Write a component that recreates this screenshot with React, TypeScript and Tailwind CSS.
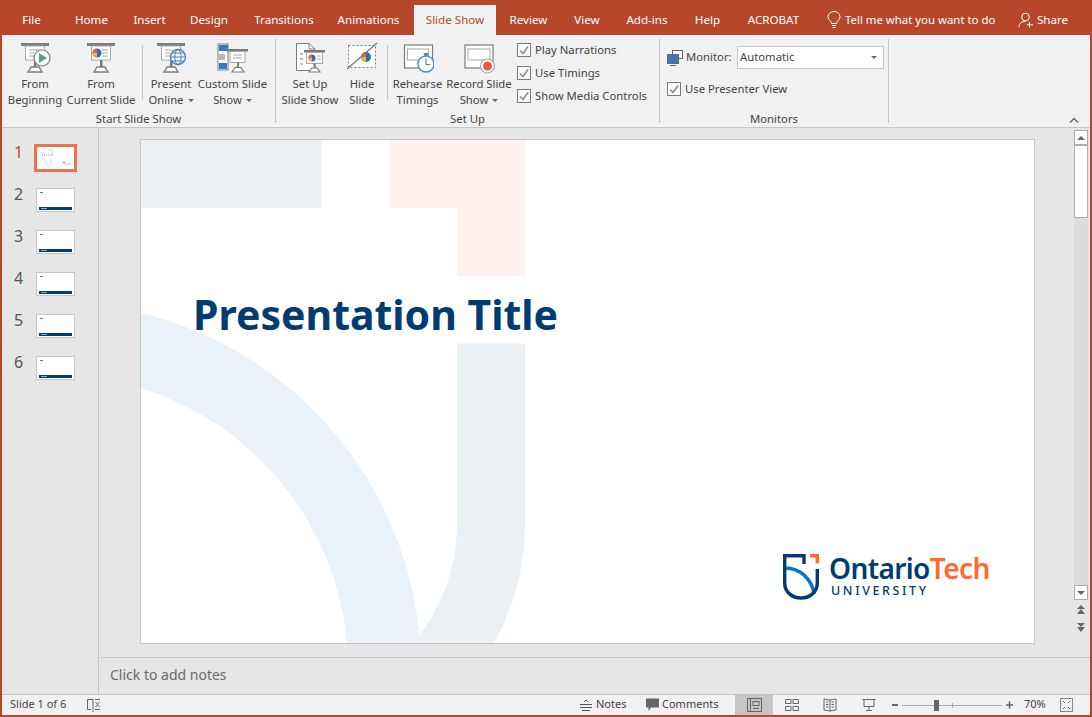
import type { ReactNode } from "react"

const FONT = "font-['Noto_Sans',sans-serif]"
const TABS = [
  { label: "File", w: "w-[59px]" },
  { label: "Home", w: "w-[61px]" },
  { label: "Insert", w: "w-[55px]" },
  { label: "Design", w: "w-[64px]" },
  { label: "Transitions", w: "w-[86px]" },
  { label: "Animations", w: "w-[83px]" },
]
const TABS_AFTER = [
  { label: "Review", w: "w-[65px]" },
  { label: "View", w: "w-[52px]" },
  { label: "Add-ins", w: "w-[68px]" },
  { label: "Help", w: "w-[53px]" },
  { label: "ACROBAT", w: "w-[79px]" },
]
const SLIDES = [2, 3, 4, 5, 6]

const GRAY = "#7b7b7b"
const LIGHT = "#a8a8a8"

function Board({ dim }: { dim?: boolean }) {
  return (
    <g>
      <rect x="2" y="1" width="28" height="3" fill={GRAY} />
      <rect x="6.5" y="4" width="19" height="14" fill="#fff" stroke={LIGHT} />
      <rect x="15" y="18" width="2.5" height="7" fill={GRAY} />
      <path d="M9 30 L12 25 H20 L23 30 Z" fill="#fff" stroke={GRAY} strokeWidth="1.4" />
      {!dim && <path d="M17 8 H23 M17 11 H23 M17 14 H23" stroke={LIGHT} />}
    </g>
  )
}

function Pie({ x, y, r }: { x: number; y: number; r: number }) {
  return (
    <g>
      <circle cx={x} cy={y} r={r} fill="#2f6fb0" />
      <path d={`M${x} ${y} L${x} ${y - r} A${r} ${r} 0 0 0 ${x - r} ${y} Z`} fill="#e8663f" />
      <path d={`M${x} ${y} L${x - r} ${y} A${r} ${r} 0 0 0 ${x} ${y + r} Z`} fill="#e9b44c" />
    </g>
  )
}

function IconFromBeginning() {
  return (
    <svg width="32" height="32" viewBox="0 0 32 32">
      <Board />
      <path d="M10 8 H18 M10 11 H15 M10 14 H15" stroke={LIGHT} />
      <circle cx="23" cy="16" r="8" fill="#fff" stroke={GRAY} strokeWidth="1.2" />
      <path d="M20 11 L28 16 L20 21 Z" fill="#5d9c8c" />
    </svg>
  )
}

function IconFromCurrent() {
  return (
    <svg width="32" height="32" viewBox="0 0 32 32">
      <Board />
      <Pie x={12} y={11} r={4.5} />
    </svg>
  )
}

function IconOnline() {
  return (
    <svg width="32" height="32" viewBox="0 0 32 32">
      <Board dim />
      <path d="M10 8 H18 M10 11 H15 M10 14 H15" stroke={LIGHT} />
      <circle cx="23" cy="15" r="7.5" fill="#fff" stroke="#3f7fc1" strokeWidth="1.3" />
      <ellipse cx="23" cy="15" rx="3.2" ry="7.5" fill="none" stroke="#3f7fc1" />
      <path d="M15.5 15 H30.5 M17 11 H29 M17 19 H29" stroke="#3f7fc1" />
    </svg>
  )
}

function IconCustom() {
  return (
    <svg width="32" height="32" viewBox="0 0 32 32">
      <rect x="1" y="2" width="10" height="26" fill="#fff" stroke={GRAY} />
      <rect x="2" y="3" width="9" height="6" fill="#3d78b8" />
      <rect x="2" y="12" width="6" height="6" fill="#b8b8b8" />
      <rect x="2" y="21" width="8" height="6" fill="#3d78b8" />
      <rect x="10" y="7" width="21" height="2.5" fill={GRAY} />
      <rect x="13" y="9.5" width="15" height="11" fill="#fff" stroke={LIGHT} />
      <path d="M16 13 H25 M16 16 H25" stroke={LIGHT} />
      <rect x="20" y="20.5" width="2" height="5" fill={GRAY} />
      <path d="M15 30 L18 25.5 H24 L27 30 Z" fill="#fff" stroke={GRAY} strokeWidth="1.2" />
    </svg>
  )
}

function IconSetUp() {
  return (
    <svg width="32" height="32" viewBox="0 0 32 32">
      <path d="M2.5 1.5 H15 L21 7 V28.5 H2.5 Z" fill="#fff" stroke={GRAY} />
      <path d="M15 1.5 V7 H21" fill="none" stroke={GRAY} />
      <path d="M6 12 H9 M6 17 H9 M6 22 H9" stroke={LIGHT} strokeWidth="1.4" />
      <rect x="10" y="8" width="21" height="2.5" fill={GRAY} />
      <rect x="12.5" y="10.5" width="16" height="11" fill="#fff" stroke={LIGHT} />
      <Pie x={18} y={16} r={3.5} />
      <path d="M23 14 H27 M23 17 H27" stroke={LIGHT} />
      <rect x="19.5" y="21.5" width="2" height="4" fill={GRAY} />
      <path d="M15 30 L18 26 H23 L26 30 Z" fill="#fff" stroke={GRAY} strokeWidth="1.2" />
    </svg>
  )
}

function IconHide() {
  return (
    <svg width="32" height="32" viewBox="0 0 32 32">
      <rect x="2.5" y="3.5" width="27" height="22" fill="#fff" stroke={GRAY} strokeDasharray="2 2" />
      <Pie x={20} y={15} r={5} />
      <path d="M1 27 L31 1" stroke={GRAY} strokeWidth="1.4" />
    </svg>
  )
}

function IconRehearse() {
  return (
    <svg width="32" height="32" viewBox="0 0 32 32">
      <rect x="2.5" y="3" width="28" height="23" fill="#fff" stroke={GRAY} strokeWidth="1.2" />
      <rect x="5.5" y="7" width="21" height="11" fill="#fff" stroke={LIGHT} />
      <path d="M21.5 11 H26.5 L25.5 14 H22.5 Z" fill={GRAY} />
      <circle cx="24" cy="22" r="8" fill="#fff" stroke="#4a8cca" strokeWidth="1.4" />
      <path d="M24 16.5 V22.5 H28" fill="none" stroke="#666" />
    </svg>
  )
}

function IconRecord() {
  return (
    <svg width="32" height="32" viewBox="0 0 32 32">
      <rect x="2" y="3" width="28" height="23" fill="#fff" stroke={GRAY} strokeWidth="1.2" />
      <rect x="5" y="7" width="22" height="11" fill="#fff" stroke={LIGHT} />
      <circle cx="24.5" cy="24" r="7" fill="#fff" stroke={LIGHT} strokeWidth="1.2" />
      <circle cx="24.5" cy="24" r="4.5" fill="#e0603c" />
    </svg>
  )
}

function Caret() {
  return <span className="inline-block ml-[4px] mb-[2px] border-x-[3px] border-t-[3px] border-x-transparent border-t-[#666]" />
}

function RibbonButton({ w, icon, lines, caret }: { w: string; icon: ReactNode; lines: string[]; caret?: boolean }) {
  return (
    <div className={`${w} flex flex-col items-center pt-[3px] text-center`}>
      <div className="h-[34px]">{icon}</div>
      {lines.map((line, i) => (
        <div key={line} className="h-[16px] leading-[16px] whitespace-nowrap">
          {line}
          {caret && i === lines.length - 1 && <Caret />}
        </div>
      ))}
    </div>
  )
}

function Sep({ cls }: { cls: string }) {
  return <div className={`w-px h-[55px] mt-[6px] bg-[#c6c6c6] ${cls}`} />
}

function Group({ w, label, children }: { w: string; label: string; children: ReactNode }) {
  return (
    <div className={`${w} h-[84px] flex flex-col border-r border-[#c6c6c6]`}>
      <div className="h-[73px] flex">{children}</div>
      <div className="h-[11px] leading-[14px] text-center whitespace-nowrap">{label}</div>
    </div>
  )
}

function Check({ label, cls }: { label: string; cls?: string }) {
  return (
    <div className={`h-[20px] flex items-center whitespace-nowrap ${cls ?? ""}`}>
      <svg width="14" height="14" viewBox="0 0 14 14" className="mr-[4px]">
        <rect x="0.5" y="0.5" width="13" height="13" fill="#fafafa" stroke="#7b7b7b" />
        <path d="M3 7.5 L6 10.5 L11 3.5" fill="none" stroke="#8a8a8a" strokeWidth="1.5" />
      </svg>
      {label}
    </div>
  )
}

function Thumb({ n }: { n: number }) {
  return (
    <div className="h-[42px] flex items-start">
      <div className="w-[34px] pl-[12px] text-[16px] leading-[20px] text-[#555] -mt-[4px]">{n}</div>
      <div className="w-[39px] h-[24px] border border-[#c6c6c6] bg-white flex flex-col justify-between p-px">
        <div className="w-[3px] h-px mt-[2px] ml-[2px] bg-[#1b8ad6]" />
        <div className="h-[3px] mx-px pl-[2px] bg-[#003c71] flex items-center">
          <div className="w-[6px] h-px bg-[#9aa5b0]" />
        </div>
      </div>
    </div>
  )
}

function ScrollBtn({ children, cls }: { children: ReactNode; cls?: string }) {
  return (
    <div className={`w-[14px] h-[15px] bg-white border border-[#ababab] flex items-center justify-center ${cls ?? ""}`}>
      {children}
    </div>
  )
}

function SlideArt() {
  return (
    <svg className="absolute inset-0" width="893" height="503" viewBox="0 0 893 503">
      <rect x="0" y="0" width="181" height="68" fill="#ebf0f4" />
      <path d="M248.5 0 H384 V136 H316 V68 H248.5 Z" fill="#fef2ee" />
      <path d="M316 203.5 H384 V383 A248 248 0 0 1 353 503 H272 A181 181 0 0 0 316 383 Z" fill="#ebf0f4" />
      <path d="M0 173 A367.6 367.6 0 0 1 279 503 H206 A295 295 0 0 0 0 248 Z" fill="#e9f2f9" />
    </svg>
  )
}

function Logo() {
  return (
    <div className="self-end mt-auto mr-[43px] mb-[43px] flex items-start">
      <svg width="36" height="46" viewBox="0 0 36 46" className="mr-[10px] shrink-0">
        <path d="M2 14 C17 14 29 25 31 40" fill="none" stroke="#0077ca" strokeWidth="3.4" />
        <path d="M21 10 V1.7 H1.7 V29 C1.7 38 9 44 18 44 C27 44 34.3 38 34.3 29 V15" fill="none" stroke="#003c71" strokeWidth="3.4" />
        <path d="M27 1.7 H34.3 V9.5" fill="none" stroke="#ff6a2f" strokeWidth="3.4" />
      </svg>
      <div className="flex flex-col w-[162px] -mt-[2px]">
        <div className="h-[32px] text-[28px] leading-[32px] font-semibold tracking-[-0.6px] whitespace-nowrap font-['Noto_Sans',sans-serif]">
          <span className="text-[#003c71]">Ontario</span>
          <span className="text-[#ff6a2f]">Tech</span>
        </div>
        <div className="ml-[2px] text-[12.5px] leading-[14px] font-medium tracking-[2.6px] text-[#003c71] whitespace-nowrap">UNIVERSITY</div>
      </div>
    </div>
  )
}

export default function App() {
  return (
    <div className={`${FONT} w-[1092px] h-[717px] flex flex-col overflow-hidden border-x-2 border-b-2 border-[#b7472a] bg-[#e6e6e6] text-[11.3px] text-[#444]`}>
      {/* Tabs */}
      <div className="h-[35px] shrink-0 flex items-end bg-[#b7472a] text-white text-[11.6px]">
        {TABS.map((t) => (
          <div key={t.label} className={`${t.w} h-[30px] pb-px flex items-center justify-center whitespace-nowrap`}>{t.label}</div>
        ))}
        <div className="w-[4px]" />
        <div className="w-[82px] h-[30px] pb-px flex items-center justify-center bg-[#f1f1f1] text-[#b7472a] whitespace-nowrap">Slide Show</div>
        {TABS_AFTER.map((t) => (
          <div key={t.label} className={`${t.w} h-[30px] pb-px flex items-center justify-center whitespace-nowrap`}>{t.label}</div>
        ))}
        <div className="ml-[14px] h-[30px] pb-px flex items-center">
          <svg width="14" height="18" viewBox="0 0 14 18" className="mr-[4px]">
            <path d="M4.5 12.5 C4.5 10 1 9 1 5.8 A6 5.3 0 0 1 13 5.8 C13 9 9.5 10 9.5 12.5 Z M5 14.5 H9 M5.5 16.5 H8.5" fill="none" stroke="#fff" />
          </svg>
          <div className="w-[173px] whitespace-nowrap text-[11.4px]">Tell me what you want to do</div>
          <svg width="16" height="16" viewBox="0 0 16 16" className="mr-[3px]">
            <circle cx="7.5" cy="5" r="3.8" fill="none" stroke="#fff" />
            <path d="M1 15 C1 11 4 9.5 7.5 9.5 M11.5 10 V15.5 M9 12.8 H15" fill="none" stroke="#fff" />
          </svg>
          <div className="whitespace-nowrap">Share</div>
        </div>
      </div>

      {/* Ribbon */}
      <div className="h-[93px] shrink-0 flex pt-[4px] bg-[#f1f1f1] border-b border-[#c6c6c6]">
        <Group w="w-[274px]" label="Start Slide Show">
          <div className="w-[4px]" />
          <RibbonButton w="w-[58px]" icon={<IconFromBeginning />} lines={["From", "Beginning"]} />
          <RibbonButton w="w-[74px]" icon={<IconFromCurrent />} lines={["From", "Current Slide"]} />
          <Sep cls="ml-[4px] mr-[3px]" />
          <RibbonButton w="w-[50px]" icon={<IconOnline />} lines={["Present", "Online"]} caret />
          <RibbonButton w="w-[73px]" icon={<IconCustom />} lines={["Custom Slide", "Show"]} caret />
        </Group>
        <Group w="w-[384px]" label="Set Up">
          <div className="w-[4px]" />
          <RibbonButton w="w-[60px]" icon={<IconSetUp />} lines={["Set Up", "Slide Show"]} />
          <RibbonButton w="w-[44px]" icon={<IconHide />} lines={["Hide", "Slide"]} />
          <Sep cls="ml-[3px] mr-[3px]" />
          <RibbonButton w="w-[53px]" icon={<IconRehearse />} lines={["Rehearse", "Timings"]} />
          <RibbonButton w="w-[70px]" icon={<IconRecord />} lines={["Record Slide", "Show"]} caret />
          <div className="ml-[3px] pt-px flex flex-col gap-[3px]">
            <Check label="Play Narrations" />
            <Check label="Use Timings" />
            <Check label="Show Media Controls" />
          </div>
        </Group>
        <Group w="w-[229px]" label="Monitors">
          <div className="pl-[7px] pt-[7px] flex flex-col">
            <div className="h-[23px] flex items-center">
              <svg width="16" height="16" viewBox="0 0 16 16" className="mr-[3px]">
                <rect x="5.5" y="0.5" width="10" height="8" fill="#fff" stroke="#666" />
                <rect x="0.5" y="4.5" width="11" height="9" fill="#3d78b8" stroke="#666" />
                <path d="M3 15.5 H9" stroke="#666" />
              </svg>
              <div className="w-[51px] whitespace-nowrap">Monitor:</div>
              <div className="w-[147px] h-[23px] flex items-center justify-between px-[2px] bg-white border border-[#c6c6c6]">
                <span>Automatic</span>
                <span className="mr-[4px] border-x-[3px] border-t-[3px] border-x-transparent border-t-[#666]" />
              </div>
            </div>
            <Check label="Use Presenter View" cls="mt-[10px]" />
          </div>
        </Group>
        <svg width="10" height="6" viewBox="0 0 10 6" className="ml-auto mr-[11px] mt-[78px]">
          <path d="M1 5.5 L5 1.5 L9 5.5" fill="none" stroke="#666" strokeWidth="1.4" />
        </svg>
      </div>

      {/* Main area */}
      <div className="flex-1 min-h-0 flex">
        <div className="w-[97px] shrink-0 border-r border-[#c6c6c6] pt-[16px]">
          <div className="h-[44px] flex items-start">
            <div className="w-[32px] pl-[12px] text-[16px] leading-[20px] text-[#c8472a] -mt-[2px]">1</div>
            <div className="w-[43px] h-[28px] border-[3px] border-[#f0704f] bg-white p-[2px]">
              <svg width="33" height="18" viewBox="0 0 33 18">
                <path d="M0 4 H5 M8 1 H13 V7 M12 9 V14 L9 18 M0 8 C5 9 8 13 9 18" fill="none" stroke="#e6edf3" strokeWidth="2" />
                <path d="M3 6 H15" stroke="#8a9bb0" strokeDasharray="1 1" />
                <path d="M25 15 H32" stroke="#c0c8d0" />
                <rect x="24" y="13" width="2" height="1" fill="#f0704f" />
              </svg>
            </div>
          </div>
          {SLIDES.map((n) => (
            <Thumb key={n} n={n} />
          ))}
        </div>

        <div className="flex-1 min-w-0 flex flex-col">
          <div className="flex-1 min-h-0 flex pl-[41px] pt-[11px]">
            <div className="relative w-[895px] h-[505px] flex flex-col border border-[#c6c6c6] bg-white">
              <SlideArt />
              <div className="relative pt-[149px] pl-[52px] text-[41px] leading-[50px] font-bold text-[#003c71] whitespace-nowrap">Presentation Title</div>
              <div className="relative mt-auto flex flex-col"><Logo /></div>
            </div>
            <div className="ml-[39px] w-[14px] -mt-[9px] flex flex-col items-center bg-[#dcdcdc]">
              <ScrollBtn>
                <span className="border-x-[4px] border-b-[4px] border-x-transparent border-b-[#666]" />
              </ScrollBtn>
              <div className="w-[14px] h-[73px] bg-white border border-[#ababab]" />
              <div className="flex-1" />
              <ScrollBtn>
                <span className="border-x-[4px] border-t-[4px] border-x-transparent border-t-[#666]" />
              </ScrollBtn>
              <div className="w-[14px] h-[57px] bg-[#e6e6e6] flex flex-col items-center pt-[5px]">
                <svg width="10" height="10" viewBox="0 0 10 10">
                  <path d="M5 0 L9 4 H1 Z M5 4 L9 9 H1 Z" fill="#666" />
                </svg>
                <svg width="10" height="10" viewBox="0 0 10 10" className="mt-[7px]">
                  <path d="M1 1 H9 L5 5 Z M1 5 H9 L5 10 Z" fill="#666" />
                </svg>
              </div>
            </div>
          </div>
          <div className="h-[37px] shrink-0 ml-[2px] border-t border-[#c6c6c6] pl-[9px] pb-[4px] flex items-center text-[14px] text-[#6a6a6a]">Click to add notes</div>
        </div>
      </div>

      {/* Status bar */}
      <div className="h-[21px] shrink-0 flex items-center bg-[#f1f1f1] border-t border-[#c6c6c6] pl-[8px] text-[11px]">
        <div className="w-[76px] pb-px whitespace-nowrap">Slide 1 of 6</div>
        <svg width="15" height="14" viewBox="0 0 15 14">
          <path d="M7 1.5 H1.5 V11.5 H5 M7 1 V14 M9 1.5 H14 M9 11.5 H14" fill="none" stroke="#666" />
          <path d="M9.5 4 L13.5 9 M13.5 4 L9.5 9" stroke="#666" />
        </svg>
        <svg width="14" height="12" viewBox="0 0 14 12" className="ml-[478px] mr-[3px]">
          <path d="M5 3 L7 1 L9 3 M1 5.5 H13 M1 8.5 H13 M3 11.5 H11" fill="none" stroke="#555" />
        </svg>
        <div className="w-[49px] pb-px whitespace-nowrap">Notes</div>
        <svg width="15" height="14" viewBox="0 0 15 14" className="mr-[2px]">
          <path d="M1 0.5 H14 V9.5 H6 L3.5 13 V9.5 H1 Z" fill="#666" />
        </svg>
        <div className="w-[73px] pb-px whitespace-nowrap">Comments</div>
        <div className="w-[38px] h-[20px] bg-[#c6c6c6] flex items-center justify-center">
          <svg width="15" height="14" viewBox="0 0 15 14">
            <rect x="0.5" y="0.5" width="14" height="13" fill="none" stroke="#666" />
            <path d="M3.5 0.5 V13.5" stroke="#666" />
            <rect x="6" y="3.5" width="6" height="4" fill="none" stroke="#666" />
            <path d="M6 10.5 H12" stroke="#666" />
          </svg>
        </div>
        <svg width="14" height="14" viewBox="0 0 14 14" className="ml-[12px]">
          <path d="M0.5 1.5 H6 V5.5 H0.5 Z M8 1.5 H13.5 V5.5 H8 Z M0.5 8.5 H6 V12.5 H0.5 Z M8 8.5 H13.5 V12.5 H8 Z" fill="none" stroke="#666" />
        </svg>
        <svg width="14" height="14" viewBox="0 0 14 14" className="ml-[24px]">
          <path d="M7 2 L1 1 V12 L7 13 L13 12 V1 Z M7 2 V13 M3 4 H5.5 M3 6.5 H5.5 M3 9 H5.5 M8.5 4 H11 M8.5 6.5 H11 M8.5 9 H11" fill="none" stroke="#666" />
        </svg>
        <svg width="14" height="14" viewBox="0 0 14 14" className="ml-[25px]">
          <path d="M0.5 1.5 H13.5 M2 1.5 V8.5 H12 V1.5 M7 8.5 V12.5 M4 12.5 H10" fill="none" stroke="#666" />
        </svg>
        <div className="ml-[16px] w-[6px] h-[2px] bg-[#666]" />
        <div className="ml-[4px] w-[100px] h-px bg-[#aaa] flex items-center">
          <div className="ml-[32px] w-[5px] h-[11px] bg-[#666]" />
          <div className="ml-[13px] w-px h-[5px] bg-[#aaa]" />
        </div>
        <svg width="7" height="8" viewBox="0 0 7 8" className="ml-[4px]">
          <path d="M3.5 0.5 V7.5 M0 4 H7" stroke="#666" strokeWidth="1.6" />
        </svg>
        <div className="ml-[11px] w-[36px] pb-px whitespace-nowrap">70%</div>
        <svg width="13" height="14" viewBox="0 0 13 14">
          <rect x="0.5" y="0.5" width="12" height="13" fill="none" stroke="#888" />
          <path d="M3 3 L5 5 M10 3 L8 5 M3 11 L5 9 M10 11 L8 9" stroke="#666" />
        </svg>
      </div>
    </div>
  )
}
